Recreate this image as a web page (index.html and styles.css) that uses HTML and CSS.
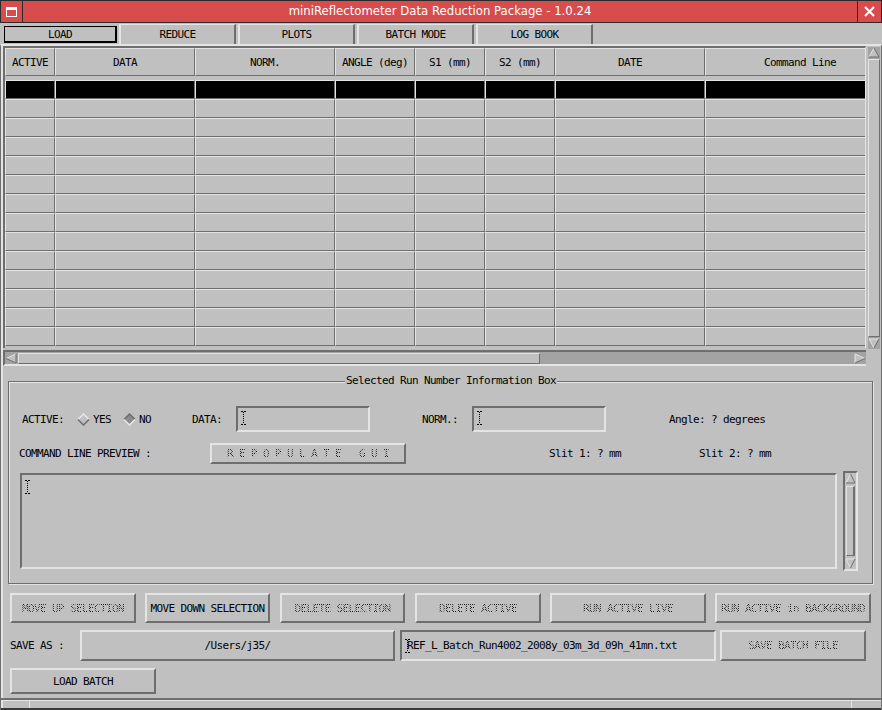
FILE: index.html
```html
<!DOCTYPE html>
<html>
<head>
<meta charset="utf-8">
<title>miniReflectometer Data Reduction Package</title>
<link rel="stylesheet" href="styles.css">
</head>
<body>
<div class="win">
  <div class="titlebar">
    <div class="tb-icon"><div class="tb-icon-glyph"></div></div>
    <div class="tb-title">miniReflectometer Data Reduction Package - 1.0.24</div>
    <div class="tb-close">
      <svg width="11" height="11" viewBox="0 0 11 11"><path d="M1 1L10 10M10 1L1 10" stroke="#fff" stroke-width="2.2"/></svg>
    </div>
  </div>

  <div class="tabs">
    <div class="tab tab-active">LOAD</div>
    <div class="tab">REDUCE</div>
    <div class="tab">PLOTS</div>
    <div class="tab">BATCH MODE</div>
    <div class="tab">LOG BOOK</div>
  </div>

  <div class="panel">
    <div class="tablebox">
      <div class="tableview">
        <div class="trow thead">
          <div class="cell">ACTIVE</div>
          <div class="cell">DATA</div>
          <div class="cell">NORM.</div>
          <div class="cell">ANGLE (deg)</div>
          <div class="cell">S1 (mm)</div>
          <div class="cell">S2 (mm)</div>
          <div class="cell">DATE</div>
          <div class="cell">Command Line</div>
        </div>
        <div class="tbody">
          <div class="trow sel"><div class="cell"></div><div class="cell"></div><div class="cell"></div><div class="cell"></div><div class="cell"></div><div class="cell"></div><div class="cell"></div><div class="cell"></div></div>
          <div class="trow"><div class="cell"></div><div class="cell"></div><div class="cell"></div><div class="cell"></div><div class="cell"></div><div class="cell"></div><div class="cell"></div><div class="cell"></div></div>
          <div class="trow"><div class="cell"></div><div class="cell"></div><div class="cell"></div><div class="cell"></div><div class="cell"></div><div class="cell"></div><div class="cell"></div><div class="cell"></div></div>
          <div class="trow"><div class="cell"></div><div class="cell"></div><div class="cell"></div><div class="cell"></div><div class="cell"></div><div class="cell"></div><div class="cell"></div><div class="cell"></div></div>
          <div class="trow"><div class="cell"></div><div class="cell"></div><div class="cell"></div><div class="cell"></div><div class="cell"></div><div class="cell"></div><div class="cell"></div><div class="cell"></div></div>
          <div class="trow"><div class="cell"></div><div class="cell"></div><div class="cell"></div><div class="cell"></div><div class="cell"></div><div class="cell"></div><div class="cell"></div><div class="cell"></div></div>
          <div class="trow"><div class="cell"></div><div class="cell"></div><div class="cell"></div><div class="cell"></div><div class="cell"></div><div class="cell"></div><div class="cell"></div><div class="cell"></div></div>
          <div class="trow"><div class="cell"></div><div class="cell"></div><div class="cell"></div><div class="cell"></div><div class="cell"></div><div class="cell"></div><div class="cell"></div><div class="cell"></div></div>
          <div class="trow"><div class="cell"></div><div class="cell"></div><div class="cell"></div><div class="cell"></div><div class="cell"></div><div class="cell"></div><div class="cell"></div><div class="cell"></div></div>
          <div class="trow"><div class="cell"></div><div class="cell"></div><div class="cell"></div><div class="cell"></div><div class="cell"></div><div class="cell"></div><div class="cell"></div><div class="cell"></div></div>
          <div class="trow"><div class="cell"></div><div class="cell"></div><div class="cell"></div><div class="cell"></div><div class="cell"></div><div class="cell"></div><div class="cell"></div><div class="cell"></div></div>
          <div class="trow"><div class="cell"></div><div class="cell"></div><div class="cell"></div><div class="cell"></div><div class="cell"></div><div class="cell"></div><div class="cell"></div><div class="cell"></div></div>
          <div class="trow"><div class="cell"></div><div class="cell"></div><div class="cell"></div><div class="cell"></div><div class="cell"></div><div class="cell"></div><div class="cell"></div><div class="cell"></div></div>
          <div class="trow"><div class="cell"></div><div class="cell"></div><div class="cell"></div><div class="cell"></div><div class="cell"></div><div class="cell"></div><div class="cell"></div><div class="cell"></div></div>
        </div>
      </div>
      <div class="vscroll">
        <svg class="arr" width="12" height="11" viewBox="0 0 12 11"><polygon points="6,1 11,10 1,10" fill="#c0c0c0"/><path d="M1 10L6 1" stroke="#e6e6e6" fill="none"/><path d="M6 1L11 10L1 10" stroke="#6e6e6e" fill="none"/></svg>
        <div class="vthumb"></div>
        <svg class="arr" width="12" height="11" viewBox="0 0 12 11"><polygon points="1,1 11,1 6,10" fill="#c0c0c0"/><path d="M6 10L1 1L11 1" stroke="#e6e6e6" fill="none"/><path d="M11 1L6 10" stroke="#6e6e6e" fill="none"/></svg>
      </div>
    </div>

    <div class="hscroll">
      <svg class="arr" width="12" height="11" viewBox="0 0 12 11"><polygon points="1,5.5 11,1 11,10" fill="#c0c0c0"/><path d="M11 1L1 5.5" stroke="#e6e6e6" fill="none"/><path d="M1 5.5L11 10L11 1" stroke="#6e6e6e" fill="none"/></svg>
      <div class="hthumb"></div>
      <div class="htrough"></div>
      <svg class="arr" width="12" height="11" viewBox="0 0 12 11"><polygon points="1,1 11,5.5 1,10" fill="#c0c0c0"/><path d="M1 10L1 1L11 5.5" stroke="#e6e6e6" fill="none"/><path d="M11 5.5L1 10" stroke="#6e6e6e" fill="none"/></svg>
    </div>

    <fieldset class="infobox">
      <legend>Selected Run Number Information Box</legend>
      <div class="info-row1">
        <span class="lbl-active">ACTIVE:</span>
        <svg class="diamond d-yes" width="13" height="13" viewBox="0 0 13 13"><polygon points="6.5,1 12,6.5 6.5,12 1,6.5" fill="#c0c0c0"/><path d="M1 6.5L6.5 1L12 6.5" stroke="#e6e6e6" stroke-width="1.6" fill="none"/><path d="M12 6.5L6.5 12L1 6.5" stroke="#6e6e6e" stroke-width="1.6" fill="none"/></svg>
        <span class="opt">YES</span>
        <svg class="diamond d-no" width="13" height="13" viewBox="0 0 13 13"><polygon points="6.5,1 12,6.5 6.5,12 1,6.5" fill="#8c8c8c"/><path d="M1 6.5L6.5 1L12 6.5" stroke="#6e6e6e" stroke-width="1.6" fill="none"/><path d="M12 6.5L6.5 12L1 6.5" stroke="#e6e6e6" stroke-width="1.6" fill="none"/></svg>
        <span class="opt">NO</span>
        <span class="lbl-data">DATA:</span>
        <div class="sunken inbox"><svg class="ibeam" width="5" height="14" viewBox="0 0 5 14"><path d="M0 0.5h2M3 0.5h2M0 13.5h2M3 13.5h2" stroke="#000"/><path d="M2.5 1V13" stroke="#000" stroke-dasharray="1 1"/></svg></div>
        <span class="lbl-norm">NORM.:</span>
        <div class="sunken inbox"><svg class="ibeam" width="5" height="14" viewBox="0 0 5 14"><path d="M0 0.5h2M3 0.5h2M0 13.5h2M3 13.5h2" stroke="#000"/><path d="M2.5 1V13" stroke="#000" stroke-dasharray="1 1"/></svg></div>
        <span class="lbl-angle">Angle: ? degrees</span>
      </div>
      <div class="info-row2">
        <span class="lbl-cmd">COMMAND LINE PREVIEW :</span>
        <div class="raised repop"><span class="dis">R E P O P U L A T E   G U I</span></div>
        <span class="lbl-slit1">Slit 1: ? mm</span>
        <span class="lbl-slit2">Slit 2: ? mm</span>
      </div>
      <div class="info-row3">
        <div class="sunken textarea"><svg class="ibeam" width="5" height="14" viewBox="0 0 5 14"><path d="M0 0.5h2M3 0.5h2M0 13.5h2M3 13.5h2" stroke="#000"/><path d="M2.5 1V13" stroke="#000" stroke-dasharray="1 1"/></svg></div>
        <div class="sunken vscroll2">
          <svg class="arr" width="11" height="11" viewBox="0 0 11 11"><polygon points="5.5,1 10,10 1,10" fill="#c0c0c0"/><path d="M1 10L5.5 1" stroke="#e6e6e6" fill="none"/><path d="M5.5 1L10 10L1 10" stroke="#6e6e6e" fill="none"/></svg>
          <div class="vthumb2"></div>
          <svg class="arr" width="11" height="11" viewBox="0 0 11 11"><polygon points="1,1 10,1 5.5,10" fill="#c0c0c0"/><path d="M5.5 10L1 1L10 1" stroke="#e6e6e6" fill="none"/><path d="M10 1L5.5 10" stroke="#6e6e6e" fill="none"/></svg>
        </div>
      </div>
    </fieldset>

    <div class="btnrow">
      <div class="raised btn w126"><span class="dis">MOVE UP SELECTION</span></div>
      <div class="raised btn w125 g9">MOVE DOWN SELECTION</div>
      <div class="raised btn w125 g10"><span class="dis">DELETE SELECTION</span></div>
      <div class="raised btn w126 g10"><span class="dis">DELETE ACTIVE</span></div>
      <div class="raised btn w156 g9"><span class="dis">RUN ACTIVE LIVE</span></div>
      <div class="raised btn w156 g9"><span class="dis">RUN ACTIVE in BACKGROUND</span></div>
    </div>

    <div class="saverow">
      <span class="lbl-save">SAVE AS :</span>
      <div class="raised pathfield">/Users/j35/</div>
      <div class="sunken filefield"><svg class="ibeam fcur" width="5" height="14" viewBox="0 0 5 14"><path d="M0 0.5h2M3 0.5h2M0 13.5h2M3 13.5h2" stroke="#000"/><path d="M2.5 1V13" stroke="#000" stroke-dasharray="1 1"/></svg><span>REF_L_Batch_Run4002_2008y_03m_3d_09h_41mn.txt</span></div>
      <div class="raised savebtn"><span class="dis">SAVE BATCH FILE</span></div>
    </div>

    <div class="loadrow">
      <div class="raised loadbtn">LOAD BATCH</div>
    </div>

    <div class="status">
      <div class="st-cell st-a"></div>
      <div class="st-cell st-b"></div>
      <div class="st-cell st-c"></div>
    </div>
  </div>
</div>
</body>
</html>
```

FILE: styles.css
```css
* { box-sizing: border-box; }
html, body { margin: 0; padding: 0; }
body {
  background: #c0c0c0;
  font-family: "DejaVu Sans Mono", "Liberation Mono", monospace;
  font-size: 11px;
  letter-spacing: -0.62px;
  color: #000;
}
.win {
  width: 882px;
  height: 710px;
  overflow: hidden;
  display: flex;
  flex-direction: column;
  background: #c0c0c0;
}

/* title bar */
.titlebar {
  height: 23px;
  display: flex;
  background: #d74c4c;
  border: 1px solid #2a2a2a;
  flex-shrink: 0;
}
.tb-icon {
  width: 22px;
  border-right: 1px solid #2a2a2a;
  display: flex;
  align-items: center;
  justify-content: center;
}
.tb-icon-glyph {
  width: 11px;
  height: 10px;
  border: 1px solid #fff;
  border-top-width: 3px;
  margin-top: 1px;
}
.tb-title {
  flex: 1;
  text-align: center;
  color: #fff;
  font-family: "DejaVu Sans", sans-serif;
  font-size: 11.7px;
  letter-spacing: 0;
  line-height: 21px;
}
.tb-close {
  width: 24px;
  border-left: 1px solid #2a2a2a;
  display: flex;
  align-items: center;
  justify-content: center;
}

/* tabs */
.tabs {
  height: 21px;
  display: flex;
  align-items: flex-end;
  padding-left: 4px;
  flex-shrink: 0;
}
.tab {
  width: 117px;
  height: 20px;
  margin-left: 2px;
  border-top: 1px solid #e4e4e4;
  border-left: 2px solid #e4e4e4;
  border-right: 2px solid #6e6e6e;
  text-align: center;
  line-height: 20px;
}
.tab-active {
  width: 113px;
  height: 17px;
  margin-left: 0;
  margin-bottom: 1px;
  border: 1px solid #000;
  border-right-width: 2px;
  border-bottom-width: 2px;
  line-height: 15px;
}

/* main panel */
.panel {
  flex: 1;
  border-top: 2px solid #e4e4e4;
  border-left: 1px solid #6e6e6e;
  border-right: 1px solid #6e6e6e;
  box-shadow: inset 2px 0 0 #e4e4e4;
  display: flex;
  flex-direction: column;
}

.raised {
  border: 2px solid;
  border-color: #e4e4e4 #6e6e6e #6e6e6e #e4e4e4;
  background: #c0c0c0;
}
.sunken {
  border: 2px solid;
  border-color: #6e6e6e #e4e4e4 #e4e4e4 #6e6e6e;
  background: #c0c0c0;
}
.dis {
  color: transparent;
  background-image: repeating-conic-gradient(#1e1e1e 0 25%, transparent 0 50%);
  background-size: 2px 2px;
  -webkit-background-clip: text;
  background-clip: text;
  white-space: pre;
}

/* table */
.tablebox {
  display: flex;
  margin-left: 2px;
  height: 302px;
}
.tableview {
  width: 863px;
  height: 302px;
  border-top: 2px solid #6e6e6e;
  border-left: 2px solid #6e6e6e;
  border-right: 1px solid #e4e4e4;
  overflow: hidden;
}
.trow {
  display: grid;
  grid-template-columns: 50px 140px 140px 80px 70px 70px 150px 190px;
  height: 19px;
  width: 890px;
}
.cell {
  border: 1px solid;
  border-color: #e4e4e4 #6e6e6e #6e6e6e #e4e4e4;
  white-space: nowrap;
  overflow: hidden;
}
.thead { height: 28px; }
.thead .cell {
  display: flex;
  align-items: center;
  justify-content: center;
}
.tbody { margin-top: 4px; }
.sel .cell { background: #000; }

.vscroll {
  width: 12px;
  height: 302px;
  margin-left: 2px;
  margin-top: 1px;
  display: flex;
  flex-direction: column;
  align-items: center;
  background: #a3a3a3;
}
.arr { display: block; flex-shrink: 0; }
.vthumb {
  flex: 1;
  width: 12px;
  margin: 1px 0;
  border: 1px solid;
  border-color: #e4e4e4 #6e6e6e #6e6e6e #e4e4e4;
  background: #c0c0c0;
}

.hscroll {
  width: 863px;
  height: 16px;
  margin-left: 2px;
  margin-top: 2px;
  border-top: 2px solid #6e6e6e;
  border-bottom: 2px solid #e4e4e4;
  border-left: 2px solid #6e6e6e;
  display: flex;
  align-items: center;
  background: #a3a3a3;
}
.hthumb {
  width: 522px;
  height: 11px;
  margin-left: 1px;
  border: 1px solid;
  border-color: #e4e4e4 #6e6e6e #6e6e6e #e4e4e4;
  background: #c0c0c0;
}
.htrough { flex: 1; }

/* info box */
.infobox {
  margin: 9px 0 0 7px;
  width: 865px;
  padding: 0 0 12px 0;
  min-inline-size: auto;
  border: 1px solid #6e6e6e;
  box-shadow: inset 1px 1px 0 #e4e4e4, 1px 1px 0 #e4e4e4;
}
.infobox legend {
  margin-left: 336px;
  padding: 0 1px;
  line-height: 12px;
  background: #c0c0c0;
}
.info-row1 {
  display: flex;
  align-items: center;
  height: 26px;
  margin-top: 19px;
  white-space: pre;
}
.lbl-active { margin-left: 13px; }
.diamond { display: block; }
.d-yes { margin-left: 13px; }
.d-no { margin-left: 12px; }
.opt { margin-left: 3px; }
.lbl-data { margin-left: 41px; }
.inbox {
  width: 134px;
  height: 26px;
  margin-left: 14px;
  padding: 3px 0 0 3px;
  white-space: normal;
  display: flex;
  align-items: flex-start;
}
.ibeam { display: block; }
.lbl-norm { margin-left: 52px; }
.lbl-angle { margin-left: 63px; }

.info-row2 {
  display: flex;
  align-items: center;
  height: 21px;
  margin-top: 11px;
  white-space: pre;
}
.lbl-cmd { margin-left: 10px; }
.repop {
  width: 196px;
  height: 21px;
  margin-left: 59px;
  display: flex;
  align-items: center;
  justify-content: center;
}
.lbl-slit1 { margin-left: 143px; }
.lbl-slit2 { margin-left: 78px; }

.info-row3 {
  display: flex;
  align-items: flex-start;
  height: 100px;
  margin-top: 7px;
}
.textarea {
  width: 817px;
  height: 96px;
  margin-left: 11px;
  margin-top: 2px;
  padding: 5px 0 0 3px;
}
.vscroll2 {
  width: 15px;
  height: 100px;
  margin-left: 6px;
  display: flex;
  flex-direction: column;
  align-items: center;
  padding: 0;
}
.vthumb2 {
  flex: 1;
  width: 9px;
  margin: 2px 0;
  border: 1px solid;
  border-color: #e4e4e4 #6e6e6e #6e6e6e #e4e4e4;
  border-right-width: 2px;
}

/* bottom buttons */
.btnrow {
  display: flex;
  margin-top: 9px;
  margin-left: 9px;
  height: 30px;
}
.btn {
  height: 30px;
  display: flex;
  align-items: center;
  justify-content: center;
  white-space: nowrap;
}
.w125 { width: 125px; }
.w126 { width: 126px; }
.w156 { width: 156px; }
.g9 { margin-left: 9px; }
.g10 { margin-left: 10px; }

.saverow {
  display: flex;
  align-items: center;
  height: 31px;
  margin-top: 7px;
  margin-left: 9px;
  white-space: pre;
}
.lbl-save { width: 70px; }
.pathfield {
  width: 315px;
  height: 31px;
  display: flex;
  align-items: center;
  justify-content: center;
}
.filefield {
  width: 316px;
  height: 31px;
  margin-left: 5px;
  display: flex;
  align-items: center;
  padding-left: 3px;
}
.fcur { margin-right: -4px; }
.filefield span { margin-left: 1px; }
.savebtn {
  width: 146px;
  height: 31px;
  margin-left: 4px;
  display: flex;
  align-items: center;
  justify-content: center;
}

.loadrow {
  display: flex;
  margin-top: 7px;
  margin-left: 9px;
  height: 26px;
}
.loadbtn {
  width: 146px;
  height: 26px;
  display: flex;
  align-items: center;
  justify-content: center;
}

.status {
  margin-top: 4px;
  height: 12px;
  border-top: 2px solid #6e6e6e;
  border-bottom: 2px solid #3a3a3a;
  box-shadow: inset 0 1px 0 #e4e4e4;
  display: flex;
}
.st-cell { height: 100%; }
.st-a { width: 29px; border-right: 1px solid #e4e4e4; }
.st-b { width: 822px; border-right: 1px solid #e4e4e4; }
.st-c { flex: 1; }
```
